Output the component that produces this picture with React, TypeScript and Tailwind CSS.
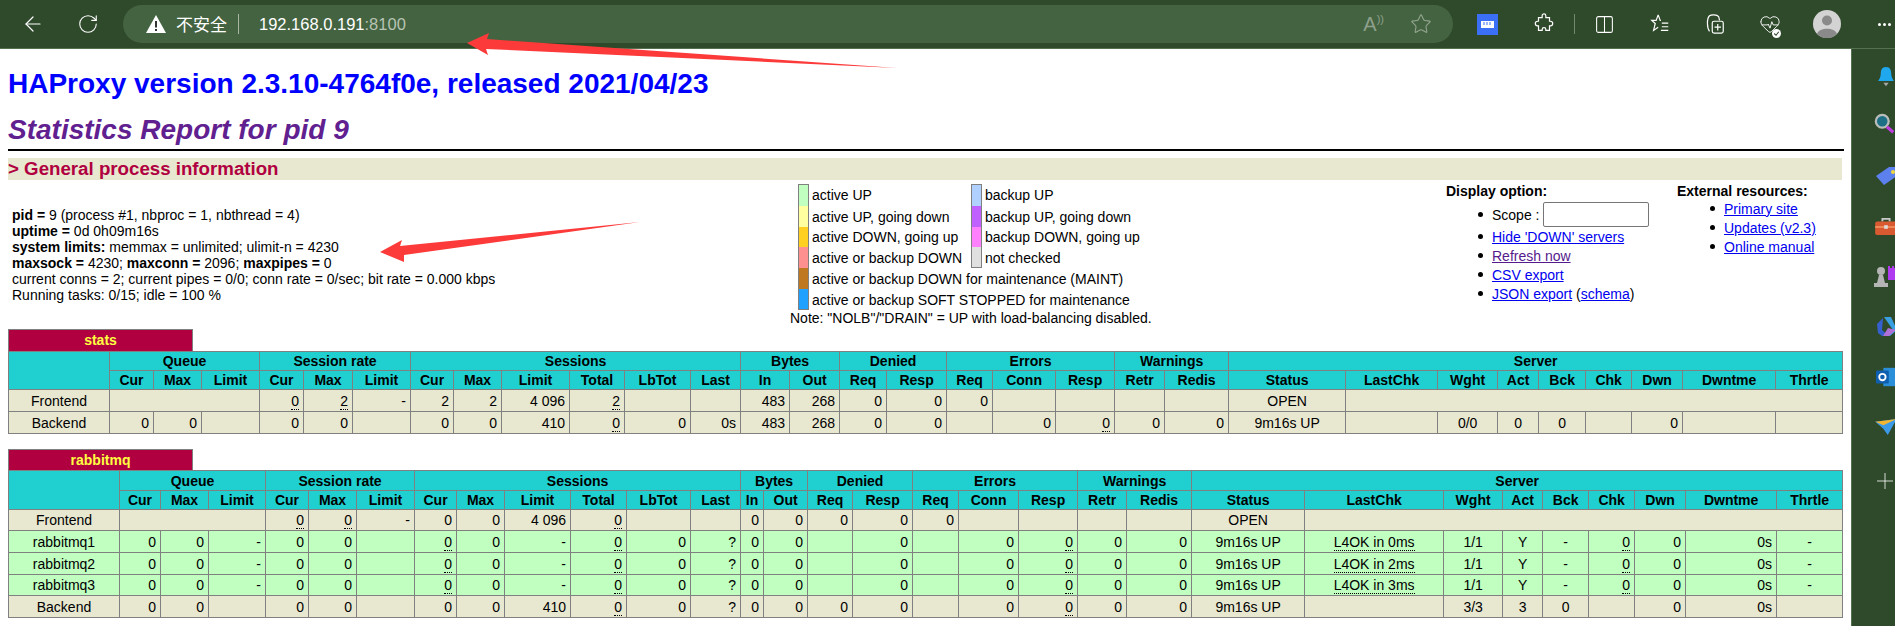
import { ArrowLeft, RotateCw, Star, Columns2, HeartPulse } from "lucide-react";
import type { ReactNode } from "react";

const font = "font-['Liberation_Sans',Arial,sans-serif]";

const statsCols = ["w-[101px]","w-[44px]","w-[48px]","w-[58px]","w-[44px]","w-[49px]","w-[58px]","w-[43px]","w-[48px]","w-[68px]","w-[55px]","w-[66px]","w-[50px]","w-[49px]","w-[50px]","w-[47px]","w-[60px]","w-[46px]","w-[63px]","w-[59px]","w-[50px]","w-[64px]","w-[117px]","w-[92px]","w-[60px]","w-[41px]","w-[47px]","w-[46px]","w-[51px]","w-[93px]","w-[67px]"];
const rabbitCols = ["w-[111px]","w-[41px]","w-[48px]","w-[57px]","w-[43px]","w-[48px]","w-[58px]","w-[42px]","w-[48px]","w-[66px]","w-[56px]","w-[64px]","w-[50px]","w-[23px]","w-[44px]","w-[45px]","w-[60px]","w-[46px]","w-[60px]","w-[59px]","w-[49px]","w-[65px]","w-[113px]","w-[139px]","w-[59px]","w-[40px]","w-[46px]","w-[46px]","w-[51px]","w-[91px]","w-[66px]"];

const subHeaders = ["Cur","Max","Limit","Cur","Max","Limit","Cur","Max","Limit","Total","LbTot","Last","In","Out","Req","Resp","Req","Conn","Resp","Retr","Redis","Status","LastChk","Wght","Act","Bck","Chk","Dwn","Dwntme","Thrtle"];
const groups: [string, number][] = [["Queue",3],["Session rate",3],["Sessions",6],["Bytes",2],["Denied",2],["Errors",3],["Warnings",2],["Server",9]];

// "_x" = dotted tooltip value, "^x" = centered, "^_x" both, "#n" = empty cell spanning n
type Row = { cells: string[]; bg: string; h: string };
const tan = "bg-[#e8e8d0]";
const green = "bg-[#c0ffc0]";

const statsRows: Row[] = [
  { bg: tan, h: "h-[22px]", cells: ["^Frontend","#3","_0","_2","-","2","2","4 096","_2","","","483","268","0","0","0","","","","","^OPEN","#8"] },
  { bg: tan, h: "h-[22px]", cells: ["^Backend","0","0","","0","0","","0","0","410","_0","0","0s","483","268","0","0","","0","_0","0","0","^9m16s UP","","^0/0","^0","^0","","0","",""] },
];

const server = (name: string, chk: string) => ["^" + name,"0","0","-","0","0","","_0","0","-","_0","0","?","0","0","","0","","0","_0","0","0","^9m16s UP","^_" + chk,"^1/1","^Y","^-","_0","0","0s","^-"];

const rabbitRows: Row[] = [
  { bg: tan, h: "h-[21px]", cells: ["^Frontend","#3","_0","_0","-","0","0","4 096","_0","","","0","0","0","0","0","","","","","^OPEN","#8"] },
  { bg: green, h: "h-[22px]", cells: server("rabbitmq1","L4OK in 0ms") },
  { bg: green, h: "h-[22px]", cells: server("rabbitmq2","L4OK in 2ms") },
  { bg: green, h: "h-[21px]", cells: server("rabbitmq3","L4OK in 3ms") },
  { bg: tan, h: "h-[22px]", cells: ["^Backend","0","0","","0","0","","0","0","410","_0","0","?","0","0","0","0","","0","_0","0","0","^9m16s UP","","^3/3","^3","^0","","0","0s",""] },
];

function Cell({ value }: { value: string }) {
  if (value.startsWith("#")) return <td colSpan={Number(value.slice(1))} className="border border-[#808080] p-0" />;
  const center = value.startsWith("^");
  const body = center ? value.slice(1) : value;
  const dotted = body.startsWith("_");
  const text = dotted ? body.slice(1) : body;
  return (
    <td className={`border border-[#808080] py-0 whitespace-nowrap ${center ? "text-center px-0" : "text-right pl-0 pr-1"}`}>
      {dotted ? <span className="border-b border-dotted border-black">{text}</span> : text}
    </td>
  );
}

function ProxyTable({ name, cols, rows, firstH, secondH, titleClass }: { name: string; cols: string[]; rows: Row[]; firstH: string; secondH: string; titleClass: string }) {
  return (
    <div className="ml-2">
      <div className={`w-[185px] ${titleClass} bg-[#b00040] border border-b-0 border-[#808080] text-[#ffff40] font-bold text-center leading-[20px]`}>{name}</div>
      <table className="table-fixed border-collapse w-[1834px] text-black">
        <colgroup>
          {cols.map((c, i) => <col key={i} className={c} />)}
        </colgroup>
        <thead className="bg-[#20d0d0]">
          <tr className={firstH}>
            <th rowSpan={2} className="border border-[#808080] p-0" />
            {groups.map(([g, n]) => <th key={g} colSpan={n} className="border border-[#808080] p-0 font-bold">{g}</th>)}
          </tr>
          <tr className={secondH}>
            {subHeaders.map((s, i) => <th key={i} className="border border-[#808080] p-0 font-bold">{s}</th>)}
          </tr>
        </thead>
        <tbody>
          {rows.map((r, i) => (
            <tr key={i} className={`${r.bg} ${r.h}`}>
              {r.cells.map((c, j) => <Cell key={j} value={c} />)}
            </tr>
          ))}
        </tbody>
      </table>
    </div>
  );
}

function LegendRow({ color, label, h }: { color: string; label: string; h: string }) {
  return (
    <div className={`flex items-center ${h}`}>
      <span className={`w-[11px] h-full border-x border-[#808080] ${color}`} />
      <span className="ml-[3px] whitespace-nowrap">{label}</span>
    </div>
  );
}

function Bullet({ children, h }: { children: ReactNode; h: string }) {
  return (
    <li className={`flex items-center ${h} relative`}>
      <span className="absolute left-[-14px] w-[5px] h-[5px] rounded-full bg-black" />
      {children}
    </li>
  );
}

const link = "text-[#0000ee] underline";

function Toolbar() {
  return (
    <div className="h-[49px] bg-[#2f4a2b] border-b border-[#55704f] flex items-center text-white [&>*]:shrink-0">
      <ArrowLeft className="ml-[21px] w-6 h-6" strokeWidth={1.2} />
      <RotateCw className="ml-[32px] w-[22px] h-[22px]" strokeWidth={1.2} />
      <div className="ml-[24px] w-[1330px] h-[38px] rounded-full bg-[#446341] flex items-center">
        <svg viewBox="0 0 20 18" className="ml-[23px] w-[20px] h-[18px]"><path d="M10 0 20 18H0Z" fill="#fff" /><path d="M9 6h2v6.5H9zM9 14h2v2H9z" fill="#333" /></svg>
        <span className="ml-[10px] text-[17px] font-['Noto_Sans_CJK_SC',sans-serif]">不安全</span>
        <span className="ml-[11px] w-px h-[20px] bg-[#a9b8a6]" />
        <span className="ml-[20px] text-[16.5px]">192.168.0.191<span className="text-[#b7c4b4]">:8100</span></span>
        <span className="ml-auto text-[20px] leading-none text-[#8ea08b] font-light">A<span className="text-[11px] align-top">))</span></span>
        <Star className="ml-[26px] mr-[21px] w-[22px] h-[22px] text-[#93a590]" strokeWidth={1.2} />
      </div>
      <svg viewBox="0 0 21 21" className="ml-[24px] w-[21px] h-[21px]"><rect width="21" height="21" fill="#3b6ff5" /><rect x="4" y="7" width="13" height="7" fill="#fff" /><path d="M7 8v3M10 8v3M13 8v3" stroke="#3b6ff5" /></svg>
      <svg viewBox="0 0 24 24" className="ml-[35px] w-[22px] h-[22px]" fill="none" stroke="#fff" strokeWidth="1.3"><path d="M10 3a2 2 0 0 1 4 0v2h4v4h1a2.5 2.5 0 0 1 0 5h-1v5h-4v-1a2 2 0 0 0-4 0v1H6v-5H5a2.5 2.5 0 0 1 0-5h1V5h4Z" /></svg>
      <span className="ml-[19px] w-px h-[20px] bg-[#73896f]" />
      <Columns2 className="ml-[19px] w-[21px] h-[21px]" strokeWidth={1.2} />
      <svg viewBox="0 0 24 24" className="ml-[34px] w-[22px] h-[22px]" fill="none" stroke="#fff" strokeWidth="1.3"><path d="M10 2l2.2 6H13M10 2 7.8 8H3l3.8 3.4L5 19l5-3.5" /><path d="M14 11h7M14 15h7M13 19h8" /></svg>
      <svg viewBox="0 0 24 24" className="ml-[33px] w-[22px] h-[22px]" fill="none" stroke="#fff" strokeWidth="1.3"><path d="M6 20C3 16 3 6 6 3c2-1.500 8-1.500 10 1l1 4" /><rect x="9" y="9" width="12" height="13" rx="2" /><path d="M15 12v7M11.500 15.500h7" /></svg>
      <div className="ml-[33px] relative">
        <HeartPulse className="w-[22px] h-[22px]" strokeWidth={1} />
        <svg viewBox="0 0 10 10" className="absolute right-0 bottom-[-3px] w-[9px] h-[9px]"><circle cx="5" cy="5" r="5" fill="#fff" /><path d="M2.500 5 4.500 7 7.500 3" fill="none" stroke="#2f4a2b" strokeWidth="1.200" /></svg>
      </div>
      <svg viewBox="0 0 28 28" className="ml-[32px] w-[28px] h-[28px]"><circle cx="14" cy="14" r="14" fill="#d3d3d3" /><circle cx="14" cy="10.500" r="5" fill="#8a8a8a" /><path d="M4 24c2-7 18-7 20 0a14 14 0 0 1-20 0Z" fill="#8a8a8a" /></svg>
      <span className="ml-[37px] flex gap-[2px]"><i className="w-[3px] h-[3px] bg-white rounded-full" /><i className="w-[3px] h-[3px] bg-white rounded-full" /><i className="w-[3px] h-[3px] bg-white rounded-full" /></span>
    </div>
  );
}

function Sidebar() {
  return (
    <div className="w-[44px] border-l border-[#55704f] bg-[#2f4a2b] flex flex-col overflow-hidden pl-[22px] pt-[2px] [&>*]:shrink-0 [&>*]:flex [&>*]:items-center [&_svg]:shrink-0">
      <div className="h-[50px] ml-[3px]">
        <svg viewBox="0 0 20 24" className="w-[18px] h-[21px]"><path d="M10 1c5 0 6 4 6 8 0 4 2 6 3 8H1c1-2 3-4 3-8 0-4 1-8 6-8Z" fill="#1fa8ee" /><path d="M7 19h6l-3 4Z" fill="#a7a7a7" /></svg>
      </div>
      <div className="h-[46px]">
        <svg viewBox="0 0 24 24" className="w-[22px] h-[22px]"><circle cx="9" cy="9" r="7" fill="#1d6f85" stroke="#b9bdb9" strokeWidth="2.500" /><path d="M14 15l7 6" stroke="#c03be0" strokeWidth="3.500" /></svg>
      </div>
      <div className="h-[58px] ml-[1px]">
        <svg viewBox="0 0 24 20" className="w-[24px] h-[20px]"><path d="M1 10 14 1l9 0v8L9 19Z" fill="#5c80ee" /><circle cx="18" cy="6" r="2" fill="#f0d83a" /></svg>
      </div>
      <div className="h-[43px]">
        <svg viewBox="0 0 24 20" className="w-[24px] h-[18px]"><path d="M8 4V1h8v3" fill="none" stroke="#c9c9c9" strokeWidth="2" /><rect y="4" width="24" height="15" rx="2" fill="#d95a30" /><rect y="9" width="24" height="2" fill="#f09060" /><rect x="10" y="8" width="4" height="4" fill="#ddd" /></svg>
      </div>
      <div className="h-[55px]">
        <svg viewBox="0 0 24 24" className="w-[24px] h-[24px]"><circle cx="7" cy="7" r="4" fill="#b5b5b5" /><path d="M5 11h4l2 8h3v4H0v-4h3Z" fill="#b5b5b5" /><path d="M14 2h2v2h2V2h2v2h2V2h2v14H14Z" fill="#b03af0" /></svg>
      </div>
      <div className="h-[48px] ml-[1px]">
        <svg viewBox="0 0 24 22" className="w-[24px] h-[22px]"><path d="M9 1h7l6 13-7 6h-5l8-6-9-13Z" fill="#3a9fe0" /><path d="M8 2 2 8l1 9 4 3 6-1-6-5Z" fill="#3660d0" /><path d="M13 12l8 2-7 6h-6Z" fill="#b070d8" /></svg>
      </div>
      <div className="h-[51px] ml-[2px]">
        <svg viewBox="0 0 24 24" className="w-[22px] h-[22px]"><rect x="8" y="2" width="16" height="20" fill="#2a8fd8" /><rect y="5" width="14" height="14" rx="1" fill="#0f5fb0" /><circle cx="7" cy="12" r="3.500" fill="none" stroke="#fff" strokeWidth="2" /></svg>
      </div>
      <div className="h-[49px]">
        <svg viewBox="0 0 24 18" className="w-[24px] h-[16px]"><path d="M0 3 24 0 14 18 9 11Z" fill="#3b9be8" /><path d="M0 3 24 0 9 7Z" fill="#f2b632" /></svg>
      </div>
      <div className="h-[59px] ml-[3px]">
        <svg viewBox="0 0 16 16" className="w-[16px] h-[16px]"><path d="M8 0v16M0 8h16" stroke="#fff" strokeWidth="0.800" /></svg>
      </div>
    </div>
  );
}

export default function App() {
  return (
    <div className={`relative w-[1895px] h-[626px] overflow-hidden bg-[#2f4a2b] ${font}`}>
      <Toolbar />
      <div className="flex h-[577px]">
        <main className="w-[1851px] bg-white text-[14px] leading-[16px] text-black">
          <h1 className="ml-2 mt-[19px] text-[28px] leading-[32px] font-bold text-[#0000ff] whitespace-nowrap">HAProxy version 2.3.10-4764f0e, released 2021/04/23</h1>
          <h2 className="ml-2 mt-[14px] text-[28px] leading-[32px] font-bold italic text-[#602090] whitespace-nowrap">Statistics Report for pid 9</h2>
          <div className="ml-2 mr-[7px] mt-[3px] h-[2px] bg-black" />
          <h3 className="ml-2 w-[1834px] mt-[7px] h-[22px] bg-[#e8e8d0] text-[18.7px] leading-[22px] font-bold text-[#b00040]">&gt; General process information</h3>
          <div className="flex h-[149px] ml-2">
            <div className="w-[782px] pl-1 pt-[27px]">
              <p><b>pid = </b>9 (process #1, nbproc = 1, nbthread = 4)</p>
              <p><b>uptime = </b>0d 0h09m16s</p>
              <p><b>system limits:</b> memmax = unlimited; ulimit-n = 4230</p>
              <p><b>maxsock = </b>4230; <b>maxconn = </b>2096; <b>maxpipes = </b>0</p>
              <p>current conns = 2; current pipes = 0/0; conn rate = 0/sec; bit rate = 0.000 kbps</p>
              <p>Running tasks: 0/15; idle = 100 %</p>
            </div>
            <div className="w-[656px] pt-[4px]">
              <div className="ml-[8px] flex">
                <div className="w-[173px]">
                  <LegendRow color="bg-[#c0ffc0] border-t" label="active UP" h="h-[22px]" />
                  <LegendRow color="bg-[#ffffa0]" label="active UP, going down" h="h-[21px]" />
                  <LegendRow color="bg-[#ffd020]" label="active DOWN, going up" h="h-[20px]" />
                  <LegendRow color="bg-[#ff9090]" label="active or backup DOWN" h="h-[21px]" />
                </div>
                <div>
                  <LegendRow color="bg-[#b0d0ff] border-t" label="backup UP" h="h-[22px]" />
                  <LegendRow color="bg-[#c060ff]" label="backup UP, going down" h="h-[21px]" />
                  <LegendRow color="bg-[#ff80ff]" label="backup DOWN, going up" h="h-[20px]" />
                  <LegendRow color="bg-[#e0e0e0] border-b" label="not checked" h="h-[21px]" />
                </div>
              </div>
              <div className="ml-[8px]">
                <LegendRow color="bg-[#c07820]" label="active or backup DOWN for maintenance (MAINT)" h="h-[21px]" />
                <LegendRow color="bg-[#20a0ff] border-b" label="active or backup SOFT STOPPED for maintenance" h="h-[21px]" />
              </div>
              <p>Note: "NOLB"/"DRAIN" = UP with load-balancing disabled.</p>
            </div>
            <div className="w-[231px] pt-[3px]">
              <b>Display option:</b>
              <ul className="ml-[46px] mt-[3px]">
                <Bullet h="h-[25px]">Scope :<span className="ml-[4px] w-[106px] h-[25px] border border-[#767676] rounded-[2px]" /></Bullet>
                <Bullet h="h-[19px]"><span className={link}>Hide 'DOWN' servers</span></Bullet>
                <Bullet h="h-[19px]"><span className="text-[#551a8b] underline">Refresh now</span></Bullet>
                <Bullet h="h-[19px]"><span className={link}>CSV export</span></Bullet>
                <Bullet h="h-[19px]"><span><span className={link}>JSON export</span> (<span className={link}>schema</span>)</span></Bullet>
              </ul>
            </div>
            <div className="pt-[3px]">
              <b>External resources:</b>
              <ul className="ml-[47px]">
                <Bullet h="h-[19px]"><span className={link}>Primary site</span></Bullet>
                <Bullet h="h-[19px]"><span className={link}>Updates (v2.3)</span></Bullet>
                <Bullet h="h-[19px]"><span className={link}>Online manual</span></Bullet>
              </ul>
            </div>
          </div>
          <ProxyTable name="stats" cols={statsCols} rows={statsRows} firstH="h-[19px]" secondH="h-[19px]" titleClass="h-[22px]" />
          <div className="h-[15px]" />
          <ProxyTable name="rabbitmq" cols={rabbitCols} rows={rabbitRows} firstH="h-[20px]" secondH="h-[19px]" titleClass="h-[21px]" />
        </main>
        <Sidebar />
      </div>
      {/* red annotation arrows drawn on top of the screenshot */}
      <svg className="absolute inset-0 w-[1895px] h-[626px] pointer-events-none" viewBox="0 0 1895 626">
        <polygon points="467,43 489,33 487,39 897,68 486,49 488,55" fill="#fd3a3a" />
        <polygon points="380,252 402,240 400,246 640,222 404,255 404,262" fill="#fd3a3a" />
      </svg>
    </div>
  );
}
